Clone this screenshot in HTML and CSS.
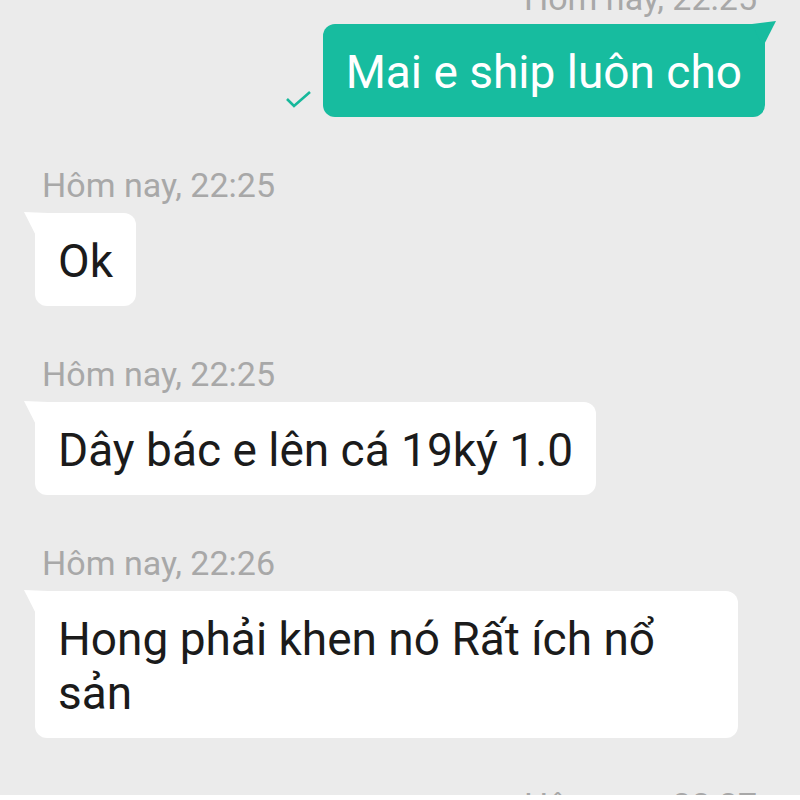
FILE: index.html
```html
<!DOCTYPE html>
<html lang="vi">
<head>
    <meta charset="UTF-8">
    <meta name="viewport" content="width=device-width, initial-scale=1.0">
    <title>Tin nhắn</title>
    <link rel="stylesheet" href="styles.css">
</head>
<body>
    <div class="chat">
        <div class="group sent">
            <div class="time">Hôm nay, 22:25</div>
            <div class="row">
                <svg class="check" width="28" height="20" viewBox="0 0 28 20">
                    <path d="M2 10 L9 17 L25 3" fill="none" stroke="#17b89b" stroke-width="2.6"/>
                </svg>
                <div class="bubble">Mai e ship luôn cho</div>
            </div>
        </div>
        <div class="group">
            <div class="time">Hôm nay, 22:25</div>
            <div class="row">
                <div class="bubble">Ok</div>
            </div>
        </div>
        <div class="group">
            <div class="time">Hôm nay, 22:25</div>
            <div class="row">
                <div class="bubble">Dây bác e lên cá 19ký 1.0</div>
            </div>
        </div>
        <div class="group">
            <div class="time">Hôm nay, 22:26</div>
            <div class="row">
                <div class="bubble">Hong phải khen nó Rất ích nổ sản</div>
            </div>
        </div>
        <div class="group sent last">
            <div class="time">Hôm nay, 22:27</div>
        </div>
    </div>
</body>
</html>
```

FILE: styles.css
```css
html, body {
    margin: 0;
    padding: 0;
    background: #ffffff;
}
.chat {
    height: 795px;
    overflow: hidden;
    background: #ebebeb;
    padding: 0 35px;
    font-family: Roboto, "Noto Sans", sans-serif;
}
.group {
    margin-top: 48px;
}
.group:first-child {
    margin-top: -22px;
}
.group.last {
    margin-top: 47px;
}
.time {
    font-size: 34px;
    line-height: 40px;
    color: #a8a8a8;
    padding-left: 7px;
    margin-bottom: 8px;
}
.group:first-child .time {
    margin-bottom: 6px;
}
.row {
    display: flex;
    align-items: flex-end;
}
.bubble {
    position: relative;
    max-width: 703px;
    box-sizing: border-box;
    background: #ffffff;
    color: #1b1b1b;
    font-size: 46px;
    line-height: 54px;
    padding: 21px 23px 18px;
    border-radius: 12px;
}
.bubble::before {
    content: "";
    position: absolute;
    top: -1px;
    left: -11px;
    width: 24px;
    height: 26px;
    background: inherit;
    clip-path: polygon(0 0, 100% 4%, 55% 100%);
}
.sent .time {
    text-align: right;
    padding-left: 0;
    padding-right: 8px;
}
.sent .row {
    justify-content: flex-end;
}
.sent .bubble {
    background: #17bc9f;
    color: #ffffff;
}
.sent .bubble::before {
    left: auto;
    right: -11px;
    top: -3px;
    clip-path: polygon(100% 0, 0 12%, 45% 100%);
}
.check {
    margin: 0 10px 8px 0;
}
```
